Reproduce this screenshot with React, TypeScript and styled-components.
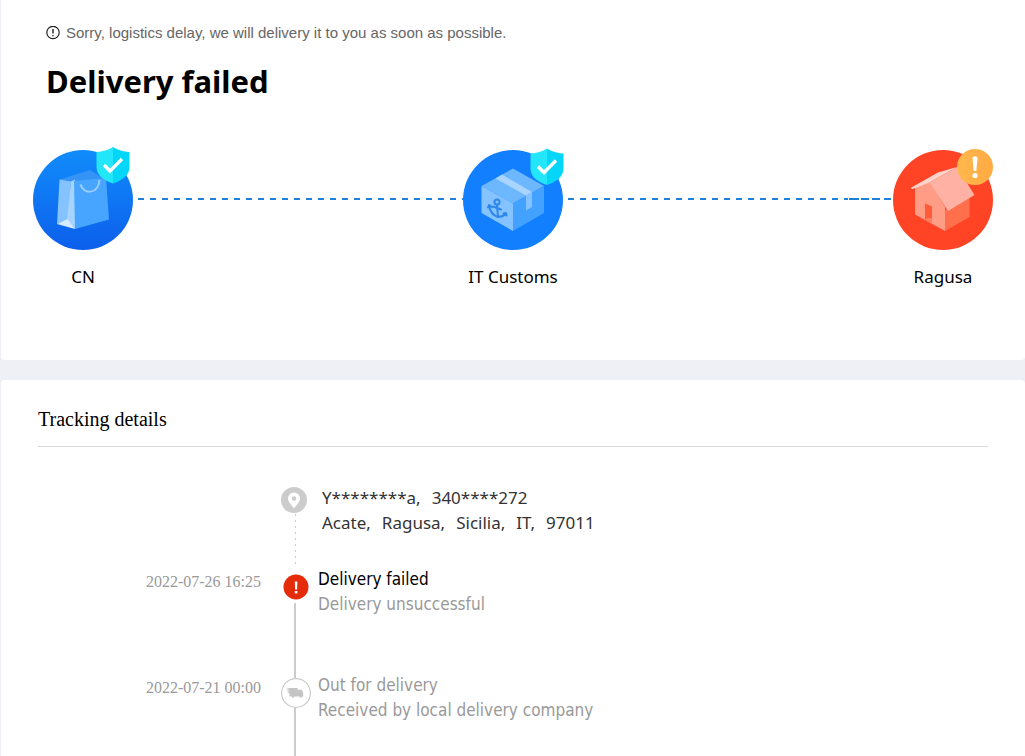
import React from "react";
import styled, { createGlobalStyle, css } from "styled-components";

const sans = `"Noto Sans", "Liberation Sans", sans-serif`;
const eventSans = `"DejaVu Sans Condensed", "Noto Sans", sans-serif`;
const serif = `"Liberation Serif", serif`;

const GlobalStyle = createGlobalStyle`
  *, *::before, *::after { box-sizing: border-box; }
  body { margin: 0; background: #eff0f5; color: #000; font-family: ${sans}; overflow-x: hidden; }
  h1, h2, p, ol { margin: 0; padding: 0; }
`;

const Page = styled.main`
  display: flex;
  flex-direction: column;
  gap: 20px;
  height: 100vh;
  overflow: hidden;
  padding-left: 1px;
`;

const Card = styled.section<{ $last?: boolean }>`
  background: #fff;
  border-radius: ${(p) => (p.$last ? "4px 4px 0 0" : "0 0 4px 4px")};
  ${(p) => (p.$last ? css`flex: 1; min-height: 0; padding: 24px 37px 0;` : css`padding: 20px 32px 71px;`)}
`;

const Notice = styled.p`
  display: flex;
  align-items: center;
  gap: 6px;
  padding-left: 13px;
  font: 15px/26px "Liberation Sans", sans-serif;
  color: #666;
  svg { flex: none; }
`;

const Title = styled.h1`
  padding: 13px 0 1px 13px;
  font: 700 31px/44px ${sans};
`;

const Route = styled.ol`
  display: flex;
  list-style: none;
  padding-top: 46px;
`;

const Stop = styled.li`
  flex: none;
  width: 100px;
  display: flex;
  flex-direction: column;
  align-items: center;
  svg { display: block; overflow: visible; }
`;

const StopName = styled.span`
  font: 17px/24px ${sans};
  margin-top: 15px;
  white-space: nowrap;
`;

const dashes = "repeating-linear-gradient(90deg, #1f80d8 0 6px, transparent 6px 12px)";
const overlap =
  "linear-gradient(90deg, #1f80d8 0 3px, #fff 3px 4px, #1f80d8 4px 14px, #fff 14px 16px, #1f80d8 16px 24px, #fff 24px 27px, #1f80d8 27px 35px, #fff 35px 39px, #1f80d8 39px 46px, #fff 46px) right / 48px 2px no-repeat";

const Connector = styled.li<{ $overlap?: boolean }>`
  flex: 1;
  height: 2px;
  margin: 48px 0 0 5px;
  background: ${(p) => (p.$overlap ? `${overlap}, ${dashes}` : dashes)};
`;

const SectionTitle = styled.h2`
  font: 400 20px/30px ${serif};
  padding-bottom: 12px;
  border-bottom: 1px solid #d9d9d9;
`;

const Timeline = styled.ol`
  list-style: none;
  padding-top: 38px;
`;

const Event = styled.li`
  display: grid;
  grid-template-columns: 243px 30px 1fr;
`;

const Time = styled.time`
  font: 16px/24px ${serif};
  color: #999;
  text-align: right;
  padding: 4px 20px 0 0;
`;

const Rail = styled.div<{ $top?: number }>`
  grid-column: 2;
  display: flex;
  flex-direction: column;
  padding-top: ${(p) => p.$top ?? 0}px;
  svg { display: block; flex: none; }
`;

const Track = styled.span<{ $dotted?: boolean; $lead?: boolean }>`
  flex: ${(p) => (p.$lead ? "0 0 6px" : "1")};
  width: ${(p) => (p.$dotted ? 1 : 2)}px;
  margin-left: ${(p) => (p.$dotted ? 14 : 13)}px;
  background: ${(p) => (p.$dotted ? "repeating-linear-gradient(#ccc 0 2px, transparent 2px 6px)" : "#ccc")};
`;

const Address = styled.div`
  font: 17px/25px ${sans};
  color: #333;
  padding: 0 0 31px 11px;
`;

const AddressLine = styled.p`
  display: flex;
  gap: 11px;
`;

const Text = styled.div<{ $current?: boolean }>`
  font: 17px/25px ${eventSans};
  color: ${(p) => (p.$current ? "#000" : "#999")};
  padding: 1px 0 55px 7px;
`;

const Muted = styled.p`
  color: #999;
`;

const AlertOutline = () => (
  <svg width="14" height="14" viewBox="0 0 14 14" fill="none" stroke="#222" aria-hidden="true">
    <circle cx="7" cy="6.500" r="6.200" strokeWidth="1.200" />
    <path d="M7 3v4.600M7 8.900v1.300" strokeWidth="1.400" />
  </svg>
);

const Shield = ({ x, y }: { x: number; y: number }) => (
  <g transform={`translate(${x} ${y})`}>
    <path d="M16.500 0C12 3 6 4.500 0 5v15c0 8 7 13.500 16.500 16.500z" fill="#23e6fb" />
    <path d="M16.500 0C21 3 27 4.500 33 5v15c0 8-7 13.500-16.500 16.500z" fill="#04d6f8" />
    <path d="M7.500 18l6 6L25.500 12" fill="none" stroke="#fff" strokeWidth="3.400" />
  </g>
);

const BagIcon = () => (
  <svg width="100" height="100" viewBox="0 0 100 100" aria-hidden="true">
    <defs>
      <linearGradient id="bagDisc" x1="0" y1="0" x2="0" y2="1">
        <stop offset="0" stopColor="#118cfb" />
        <stop offset="1" stopColor="#0c5feb" />
      </linearGradient>
    </defs>
    <circle cx="50" cy="50" r="50" fill="url(#bagDisc)" />
    <path d="M26.500 29.500L57 20l16 10-33 3z" fill="#3593f6" />
    <path d="M26.500 29.500L38 31.500 35 69.500l-11 4.500z" fill="#84c3ff" />
    <path d="M38 31.500l4-2V79l-8-9.500z" fill="#a5d4ff" />
    <path d="M24 74l10.500-5L42 79z" fill="#d6ebff" />
    <path d="M41 31L73 28l3 41.500L42 79z" fill="#48a5ff" />
    <path d="M47.500 34.500c3 10.500 18 10 19-4.500" fill="none" stroke="#9ccfff" strokeWidth="2" />
    <Shield x={63.5} y={-3} />
  </svg>
);

const ParcelIcon = () => (
  <svg width="100" height="100" viewBox="0 0 100 100" aria-hidden="true">
    <circle cx="50" cy="50" r="50" fill="#127fff" />
    <path d="M50 18.500L81 36 50 53.500 18.500 36z" fill="#6db7ff" />
    <path d="M18.500 36L50 53.500V81L18.500 63z" fill="#84c3ff" />
    <path d="M81 36L50 53.500V81l31-18z" fill="#43a1ff" />
    <path d="M32.500 28.500l6.500-4L69 42l-6 3.500z" fill="#a8d4ff" />
    <path d="M63 45.500l6-3.500v15l-6 3.500z" fill="#84c3ff" />
    <g fill="none" stroke="#2e86ec" strokeWidth="2" strokeLinecap="round" strokeLinejoin="round">
      <circle cx="34" cy="52" r="2.600" />
      <path d="M34 55l1 12M30 56.500l8 3M26 55.500c1 6 4 10 9 11.500 4 0 6-1.500 7.500-3M25 57.500l1-2.500 3 2M40.500 63.500l2.500-.5.5 2.500" />
    </g>
    <Shield x={67.5} y={-1.5} />
  </svg>
);

const HouseIcon = () => (
  <svg width="100" height="100" viewBox="0 0 100 100" aria-hidden="true">
    <defs>
      <linearGradient id="badge" x1="0" y1="0" x2="1" y2="0">
        <stop offset="0" stopColor="#ffb84d" />
        <stop offset="1" stopColor="#ffaa42" />
      </linearGradient>
    </defs>
    <circle cx="50" cy="50" r="50" fill="#ff4426" />
    <path d="M22 37l15-5 15 25v24L22 64.500z" fill="#ff9c86" />
    <path d="M52 60l24.500-13v20L52 81z" fill="#ff6f4c" />
    <path d="M17.500 38L45 22.500 64 17 36.500 32.500 19.500 39z" fill="#ffd3cc" />
    <path d="M36.500 32.500L64 17l17.500 28L55 61z" fill="#ffb1a3" />
    <path d="M32 53.500l7 3V73l-7-3.500z" fill="#ff5b3b" />
    <path d="M32 69.500l4-2 3 1.500v4z" fill="#ff7d60" />
    <circle cx="82" cy="17" r="18" fill="url(#badge)" />
    <path d="M79.500 8.500c0-3 5-3 5 0L83.300 21h-2.600z" fill="#fff" />
    <circle cx="82" cy="25.500" r="2.600" fill="#fff" />
  </svg>
);

const PinIcon = () => (
  <svg width="28" height="28" viewBox="0 0 28 28" aria-hidden="true">
    <circle cx="13" cy="14" r="13" fill="#ccc" />
    <path d="M13 22.500c-3-4-6-7-6-10a6 6 0 0 1 12 0C19 15.500 16 18.500 13 22.500z" fill="#fff" />
    <circle cx="13" cy="12.500" r="2.300" fill="#ccc" />
  </svg>
);

const FailedIcon = () => (
  <svg width="30" height="29" viewBox="0 0 30 29" aria-hidden="true">
    <circle cx="15" cy="13" r="12.500" fill="#e42c0a" />
    <path d="M13.800 7.500h2.600l-.3 8h-2zM13.800 17h2.600v2.400h-2.600z" fill="#fff" />
  </svg>
);

const TruckIcon = () => (
  <svg width="30" height="30" viewBox="0 0 30 30" aria-hidden="true">
    <circle cx="15" cy="15" r="14.400" fill="#fff" stroke="#ccc" strokeWidth="1.200" />
    <path d="M9 10h7.500v1.800h4l1.700 2.700v4H21a1.300 1.300 0 0 1-2.600 0h-5a1.300 1.300 0 0 1-2.600 0H8.500v-3.200L6 14.600l2.500-.8-3-.9 3-.8L4.800 11z" fill="#c4c4c4" />
  </svg>
);

export default function App() {
  return (
    <>
      <GlobalStyle />
      <Page>
        <Card>
          <Notice>
            <AlertOutline />
            Sorry, logistics delay, we will delivery it to you as soon as possible.
          </Notice>
          <Title>Delivery failed</Title>
          <Route>
            <Stop><BagIcon /><StopName>CN</StopName></Stop>
            <Connector aria-hidden="true" />
            <Stop><ParcelIcon /><StopName>IT Customs</StopName></Stop>
            <Connector $overlap aria-hidden="true" />
            <Stop><HouseIcon /><StopName>Ragusa</StopName></Stop>
          </Route>
        </Card>
        <Card $last>
          <SectionTitle>Tracking details</SectionTitle>
          <Timeline>
            <Event>
              <Rail $top={1}><PinIcon /><Track $dotted /></Rail>
              <Address>
                <AddressLine>
                  <span>Y********a,</span> <span>340****272</span>
                </AddressLine>
                <AddressLine>
                  <span>Acate,</span> <span>Ragusa,</span> <span>Sicilia,</span> <span>IT,</span> <span>97011</span>
                </AddressLine>
              </Address>
            </Event>
            <Event>
              <Time>2022-07-26 16:25</Time>
              <Rail $top={8}><FailedIcon /><Track /></Rail>
              <Text $current>
                <p>Delivery failed</p>
                <Muted>Delivery unsuccessful</Muted>
              </Text>
            </Event>
            <Event>
              <Time>2022-07-21 00:00</Time>
              <Rail><Track $lead /><TruckIcon /><Track /></Rail>
              <Text>
                <p>Out for delivery</p>
                <p>Received by local delivery company</p>
              </Text>
            </Event>
          </Timeline>
        </Card>
      </Page>
    </>
  );
}
